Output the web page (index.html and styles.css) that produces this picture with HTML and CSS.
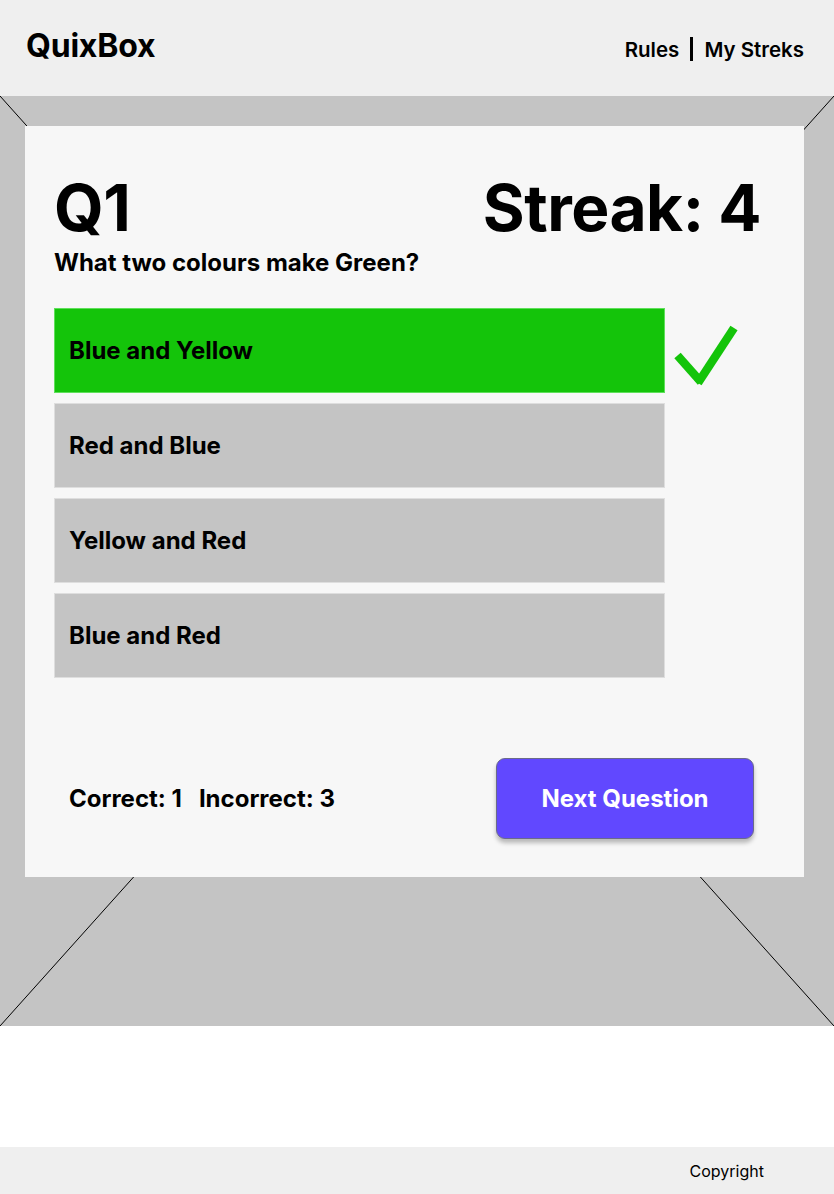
FILE: index.html
```html
<!DOCTYPE html>
<html lang="en">
<head>
<meta charset="utf-8">
<title>QuixBox</title>
<link rel="stylesheet" href="styles.css">
</head>
<body>
<header class="header">
  <div class="logo">QuixBox</div>
  <nav class="nav">
    <a class="nav-link" href="#">Rules</a>
    <span class="nav-sep"></span>
    <a class="nav-link" href="#">My Streks</a>
  </nav>
</header>
<main class="hero">
  <svg class="hero-x" viewBox="0 0 100 100" preserveAspectRatio="none" aria-hidden="true">
    <line x1="0" y1="0" x2="100" y2="100" vector-effect="non-scaling-stroke"/>
    <line x1="100" y1="0" x2="0" y2="100" vector-effect="non-scaling-stroke"/>
  </svg>
  <section class="card">
    <div class="title-row">
      <h1 class="qnum">Q1</h1>
      <div class="streak">Streak: 4</div>
    </div>
    <p class="question">What two colours make Green?</p>
    <div class="answers">
      <div class="answer-row">
        <div class="answer answer-correct">Blue and Yellow</div>
        <svg class="check" viewBox="0 0 80 85" aria-hidden="true">
          <line x1="12.5" y1="47.5" x2="36" y2="74"/>
          <line x1="33" y1="75" x2="69" y2="20"/>
        </svg>
      </div>
      <div class="answer-row"><div class="answer">Red and Blue</div></div>
      <div class="answer-row"><div class="answer">Yellow and Red</div></div>
      <div class="answer-row"><div class="answer">Blue and Red</div></div>
    </div>
    <div class="bottom-row">
      <div class="score"><span>Correct: 1</span><span>Incorrect: 3</span></div>
      <button class="next-btn" type="button">Next Question</button>
    </div>
  </section>
</main>
<div class="spacer"></div>
<footer class="footer">
  <span class="copyright">Copyright</span>
</footer>
</body>
</html>
```

FILE: styles.css
```css
* { box-sizing: border-box; }
html, body { margin: 0; padding: 0; }
body {
  font-family: Inter, "Noto Sans", "Liberation Sans", sans-serif;
  color: #000;
  background: #fff;
  width: 834px;
}
.header {
  height: 96px;
  background: #efefef;
  display: flex;
  align-items: center;
  justify-content: space-between;
  padding: 0 30px 0 26px;
}
.logo {
  font-size: 32px;
  font-weight: 700;
  letter-spacing: -0.2px;
  margin-top: -5px;
}
.nav {
  display: flex;
  align-items: center;
  gap: 11px;
  margin-top: 2px;
}
.nav-link {
  color: #000;
  text-decoration: none;
  font-size: 20.5px;
  font-weight: 600;
}
.nav-sep {
  width: 3px;
  height: 24px;
  background: #000;
}
.hero {
  position: relative;
  height: 930px;
  background: #c4c4c4;
  padding: 30px 30px 0 25px;
}
.hero-x {
  position: absolute;
  left: 0; top: 0;
  width: 100%; height: 100%;
}
.hero-x line { stroke: #000; stroke-width: 1; }
.card {
  position: relative;
  width: 779px;
  height: 751px;
  background: #f7f7f7;
  padding: 47px 43px 0 29px;
  display: flex;
  flex-direction: column;
}
.title-row {
  display: flex;
  justify-content: space-between;
  align-items: baseline;
}
.qnum {
  margin: 0;
  font-size: 64px;
  font-weight: 700;
  line-height: 1.1;
  letter-spacing: -0.5px;
}
.streak {
  font-size: 64px;
  font-weight: 700;
  line-height: 1.1;
  letter-spacing: -0.5px;
}
.question {
  margin: 6px 0 0;
  font-size: 24px;
  font-weight: 700;
  line-height: 1.2;
}
.answers {
  margin-top: 30px;
  display: flex;
  flex-direction: column;
  gap: 10px;
}
.answer-row {
  display: flex;
  height: 85px;
}
.answer {
  width: 611px;
  height: 85px;
  background: #c4c4c4;
  border: 1px solid #dedede;
  display: flex;
  align-items: center;
  padding-left: 14px;
  font-size: 24px;
  font-weight: 700;
}
.answer-correct {
  background: #14c40a;
  border-color: #5ee05a;
}
.check {
  width: 80px;
  height: 85px;
}
.check line {
  stroke: #14c40a;
  stroke-width: 8.5;
  stroke-linecap: butt;
}
.bottom-row {
  margin-top: 80px;
  display: flex;
  align-items: center;
  justify-content: space-between;
  padding-left: 15px;
  margin-right: 7px;
}
.score {
  display: flex;
  gap: 17px;
  font-size: 24px;
  font-weight: 700;
}
.next-btn {
  width: 258px;
  height: 81px;
  background: #6148ff;
  color: #fff;
  border: 1px solid #6b6b8a;
  border-radius: 9px;
  box-shadow: 0 4px 4px rgba(0, 0, 0, 0.25);
  font-family: inherit;
  font-size: 24px;
  font-weight: 700;
  cursor: pointer;
}
.spacer { height: 121px; }
.footer {
  height: 47px;
  background: #efefef;
  display: flex;
  align-items: center;
  justify-content: flex-end;
  padding-right: 70px;
}
.copyright {
  font-size: 16px;
  font-weight: 400;
}
```
